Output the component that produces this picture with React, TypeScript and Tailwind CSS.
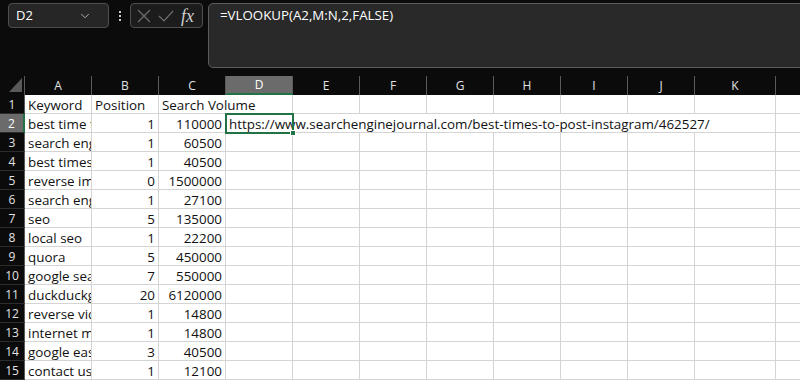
import { ChevronDown } from 'lucide-react'

const cols = ['A', 'B', 'C', 'D', 'E', 'F', 'G', 'H', 'I', 'J', 'K', 'L']
const widths = ['w-[67px]', 'w-[67px]', 'w-[67px]', 'w-[67px]', 'w-[67px]', 'w-[67px]', 'w-[67px]', 'w-[67px]', 'w-[67px]', 'w-[67px]', 'w-[81px]', 'w-[60px]']

const rows: [string, number, number][] = [
  ['best time to post on instagram', 1, 110000],
  ['search engines', 1, 60500],
  ['best times to post on instagram', 1, 40500],
  ['reverse image search', 0, 1500000],
  ['search engine optimization', 1, 27100],
  ['seo', 5, 135000],
  ['local seo', 1, 22200],
  ['quora', 5, 450000],
  ['google search', 7, 550000],
  ['duckduckgo', 20, 6120000],
  ['reverse video search', 1, 14800],
  ['internet marketing', 1, 14800],
  ['google easter eggs', 3, 40500],
  ['contact us', 1, 12100],
]

const url = 'https://www.searchenginejournal.com/best-times-to-post-instagram/462527/'

function RowHead({ n, active }: { n: number; active?: boolean }) {
  return (
    <div
      className={
        'w-[25px] h-[19px] shrink-0 flex items-center justify-center pt-[1px] text-[12px] border-b border-[#2c2c2c] ' +
        (active ? 'bg-[#6b6b6b] text-white border-r-2 border-r-[#217346]' : 'bg-[#0b0b0b] text-[#e2e2e2] border-r border-r-[#5a5a5a]')
      }
    >
      {n}
    </div>
  )
}

function Cell({
  i,
  children,
  right,
  noBorder,
  overflow,
}: {
  i: number
  children?: React.ReactNode
  right?: boolean
  noBorder?: boolean
  overflow?: boolean
}) {
  return (
    <div
      className={
        widths[i] +
        ' h-[19px] shrink-0 border-b border-[#d4d4d4] flex items-center pt-[3px] text-[13.4px] text-[#111] whitespace-nowrap ' +
        (noBorder ? '' : 'border-r ') +
        (right ? 'justify-end pr-[3px] ' : 'pl-[3px] ') +
        (overflow ? 'overflow-visible' : 'overflow-hidden')
      }
    >
      {children}
    </div>
  )
}

export default function App() {
  return (
    <div className="w-[800px] h-[380px] overflow-hidden bg-[#0b0b0b] font-['Open_Sans',sans-serif] select-none">
      {/* top bar */}
      <div className="h-[76px] flex items-start pt-[3px]">
        <div className="ml-[8px] w-[101px] h-[25px] shrink-0 rounded-[4px] border border-[#4e4e4e] bg-[#262626] flex items-center pl-[7px] pr-[16px] text-white text-[13px]">
          <span className="flex-1">D2</span>
          <ChevronDown size={14} strokeWidth={1.5} className="text-[#bdbdbd]" />
        </div>
        <div className="w-[21px] h-[25px] shrink-0 flex flex-col items-center justify-center gap-[2px]">
          <span className="w-[2px] h-[2px] bg-[#d0d0d0]" />
          <span className="w-[2px] h-[2px] bg-[#d0d0d0]" />
          <span className="w-[2px] h-[2px] bg-[#d0d0d0]" />
        </div>
        <div className="w-[73px] h-[25px] shrink-0 rounded-[4px] border border-[#4e4e4e] bg-[#1c1c1c] flex items-center pl-[6px] gap-[7px]">
          <svg width="14" height="14" viewBox="0 0 14 14" fill="none" stroke="#6e6e6e" strokeWidth="1.2">
            <path d="M1 1 L13 13 M13 1 L1 13" />
          </svg>
          <svg width="16" height="12" viewBox="0 0 16 12" fill="none" stroke="#6e6e6e" strokeWidth="1.2">
            <path d="M1 6 L6 11 L15 1" />
          </svg>
          <span className="font-['Liberation_Serif',serif] italic text-[18px] text-[#cfcfcf] leading-none">fx</span>
        </div>
        <div className="ml-[5px] w-[620px] h-[65px] shrink-0 rounded-[5px] border border-[#5c5c5c] bg-[#292929] pl-[11px] pt-[2px] text-white text-[13.3px]">
          =VLOOKUP(A2,M:N,2,FALSE)
        </div>
      </div>

      {/* column headers */}
      <div className="flex h-[19px] bg-[#0b0b0b]">
        <div className="w-[25px] shrink-0 relative border-r border-[#5a5a5a]">
          <div className="absolute right-[2px] bottom-[3px] w-0 h-0 border-l-[13px] border-l-transparent border-b-[14px] border-b-[#595959]" />
        </div>
        {cols.map((c, i) => (
          <div
            key={c}
            className={
              widths[i] +
              ' shrink-0 flex items-center justify-center text-[12px] border-r border-[#5a5a5a] ' +
              (c === 'D' ? 'bg-[#6b6b6b] text-white border-b-2 border-b-[#217346]' : 'text-[#e2e2e2]')
            }
          >
            {c}
          </div>
        ))}
      </div>

      {/* grid */}
      <div className="bg-white">
        <div className="flex">
          <RowHead n={1} />
          <Cell i={0}>Keyword</Cell>
          <Cell i={1}>Position</Cell>
          <Cell i={2} overflow noBorder>
            Search Volume
          </Cell>
          {cols.slice(3).map((c, j) => (
            <Cell key={c} i={j + 3} />
          ))}
        </div>
        {rows.map((r, k) => (
          <div className="flex" key={k}>
            <RowHead n={k + 2} active={k === 0} />
            <Cell i={0}>{r[0]}</Cell>
            <Cell i={1} right>
              {r[1]}
            </Cell>
            <Cell i={2} right>
              {r[2]}
            </Cell>
            {k === 0 ? (
              <>
                <div className="relative w-[67px] h-[19px] shrink-0 border-b border-[#d4d4d4] flex items-center pt-[3px] pl-[3px] text-[13.4px] text-[#111] whitespace-nowrap">
                  {url}
                  <div className="absolute left-[-1px] top-[-1px] w-[69px] h-[21px] border-2 border-[#217346]" />
                  <div className="absolute left-[64px] top-[16px] w-[6px] h-[6px] bg-[#217346] border border-white" />
                </div>
                {cols.slice(4).map((c, j) => (
                  <Cell key={c} i={j + 4} noBorder={j + 4 < 10} />
                ))}
              </>
            ) : (
              cols.slice(3).map((c, j) => <Cell key={c} i={j + 3} />)
            )}
          </div>
        ))}
      </div>
    </div>
  )
}
